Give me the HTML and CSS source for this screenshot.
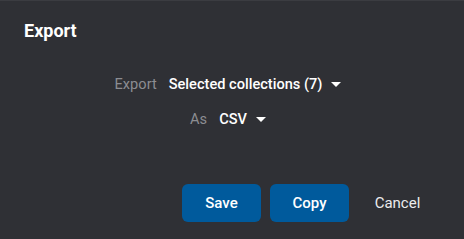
FILE: index.html
```html
<!DOCTYPE html>
<html>
<head>
    <title>Export</title>
    <link rel="stylesheet" href="styles.css">
</head>
<body>
    <div class="dialog">
        <h2 class="dialog-title">Export</h2>
        <div class="dialog-body">
            <div class="field-row">
                <span class="field-label">Export</span>
                <span class="dropdown">Selected collections (7)
                    <svg class="caret" width="10" height="5" viewBox="0 0 10 5"><path d="M0 0h10L5 5z" fill="#fff"/></svg>
                </span>
            </div>
            <div class="field-row">
                <span class="field-label">As</span>
                <span class="dropdown">CSV
                    <svg class="caret" width="10" height="5" viewBox="0 0 10 5"><path d="M0 0h10L5 5z" fill="#fff"/></svg>
                </span>
            </div>
        </div>
        <div class="dialog-actions">
            <button class="btn btn-primary">Save</button>
            <button class="btn btn-primary">Copy</button>
            <button class="btn btn-plain">Cancel</button>
        </div>
    </div>
</body>
</html>
```

FILE: styles.css
```css
body {
    margin: 0;
    background-color: #2f3035;
    font-family: Roboto, "Liberation Sans", sans-serif;
}

.dialog {
    width: 464px;
    height: 239px;
    box-sizing: border-box;
    border-top: 1px solid #3b3c41;
    background-color: #2f3035;
    color: #ffffff;
}

.dialog-title {
    margin: 0;
    padding: 19px 24px 0;
    font-size: 18px;
    font-weight: 700;
    line-height: 22px;
}

.dialog-body {
    padding-top: 31px;
    padding-right: 8px;
}

.field-row {
    display: flex;
    justify-content: center;
    align-items: center;
    height: 22px;
    margin-bottom: 13px;
    font-size: 14.6px;
}

.field-label {
    color: #8c8d92;
    margin-right: 12px;
}

.dropdown {
    display: flex;
    align-items: center;
    font-weight: 500;
}

.caret {
    margin-left: 9px;
}

.dialog-actions {
    display: flex;
    justify-content: flex-end;
    gap: 9px;
    padding: 41px 27px 0 0;
}

.btn {
    width: 79px;
    height: 38px;
    border: none;
    border-radius: 6px;
    font-family: Roboto, "Liberation Sans", sans-serif;
    font-size: 15px;
    font-weight: 500;
    color: #ffffff;
    cursor: pointer;
}

.btn-primary {
    background-color: #005a9c;
}

.btn-plain {
    background: none;
    font-weight: 400;
    color: #ececee;
}
```
